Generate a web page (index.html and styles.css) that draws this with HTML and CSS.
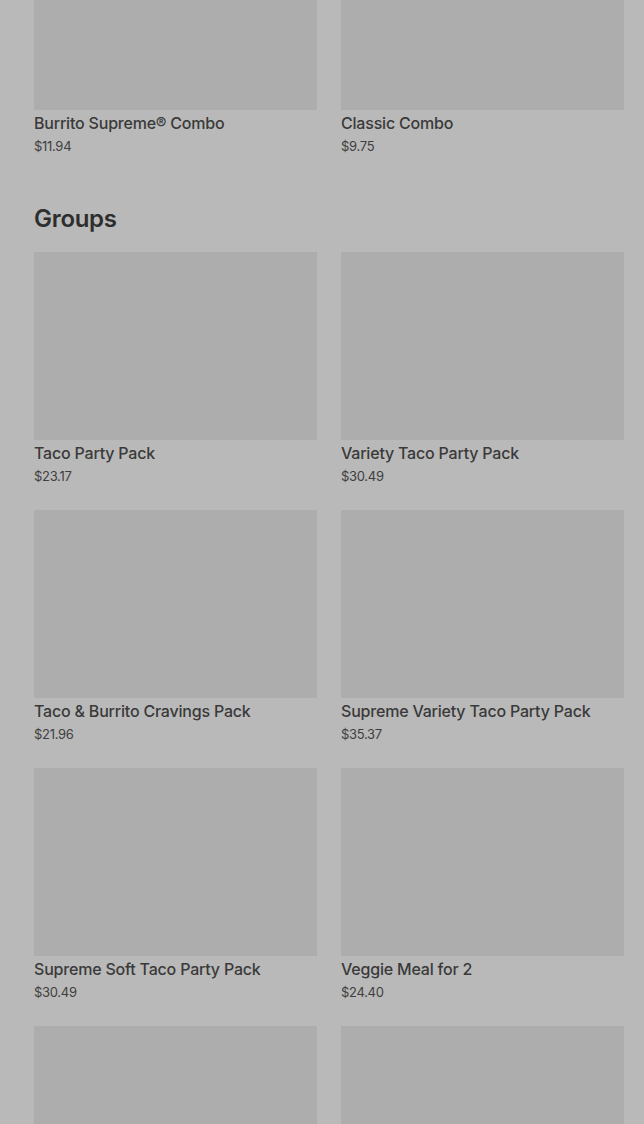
FILE: index.html
```html
<!DOCTYPE html>
<html lang="en">
<head>
    <meta charset="UTF-8">
    <meta name="viewport" content="width=device-width, initial-scale=1.0">
    <title>Menu</title>
    <link rel="stylesheet" href="styles.css">
</head>
<body>
    <main class="menu">
        <!-- Combos (scrolled, only last row visible) -->
        <section class="section combos">
            <div class="grid">
                <div class="card">
                    <div class="card-img"></div>
                    <div class="card-name">Burrito Supreme® Combo</div>
                    <div class="card-price">$11.94</div>
                </div>
                <div class="card">
                    <div class="card-img"></div>
                    <div class="card-name">Classic Combo</div>
                    <div class="card-price">$9.75</div>
                </div>
            </div>
        </section>

        <section class="section">
            <h2 class="section-title">Groups</h2>
            <div class="grid">
                <div class="card">
                    <div class="card-img"></div>
                    <div class="card-name">Taco Party Pack</div>
                    <div class="card-price">$23.17</div>
                </div>
                <div class="card">
                    <div class="card-img"></div>
                    <div class="card-name">Variety Taco Party Pack</div>
                    <div class="card-price">$30.49</div>
                </div>
                <div class="card">
                    <div class="card-img"></div>
                    <div class="card-name">Taco &amp; Burrito Cravings Pack</div>
                    <div class="card-price">$21.96</div>
                </div>
                <div class="card">
                    <div class="card-img"></div>
                    <div class="card-name">Supreme Variety Taco Party Pack</div>
                    <div class="card-price">$35.37</div>
                </div>
                <div class="card">
                    <div class="card-img"></div>
                    <div class="card-name">Supreme Soft Taco Party Pack</div>
                    <div class="card-price">$30.49</div>
                </div>
                <div class="card">
                    <div class="card-img"></div>
                    <div class="card-name">Veggie Meal for 2</div>
                    <div class="card-price">$24.40</div>
                </div>
                <div class="card">
                    <div class="card-img"></div>
                </div>
                <div class="card">
                    <div class="card-img"></div>
                </div>
            </div>
        </section>
    </main>
</body>
</html>
```

FILE: styles.css
```css
body {
    margin: 0;
    background-color: #b9b9b9;
    font-family: Inter, "Noto Sans", Arial, sans-serif;
    color: #3a3a3a;
}

.menu {
    padding: 0 20px 0 34px;
}

.combos {
    margin-top: -78px;
}

.section {
    margin-bottom: 47px;
}

.section-title {
    margin: 0 0 17px;
    font-size: 24px;
    line-height: 32px;
    font-weight: 600;
    letter-spacing: -0.3px;
    color: #2e2e2e;
}

.grid {
    display: grid;
    grid-template-columns: 1fr 1fr;
    column-gap: 24px;
    row-gap: 24px;
}

.card-img {
    height: 188px;
    background-color: #adadad;
}

.card-name {
    margin-top: 2px;
    font-size: 16px;
    line-height: 22px;
    font-weight: 500;
    letter-spacing: -0.2px;
}

.card-price {
    margin-top: 2px;
    font-size: 13px;
    line-height: 20px;
    letter-spacing: -0.3px;
    color: #3f3f3f;
}
```
